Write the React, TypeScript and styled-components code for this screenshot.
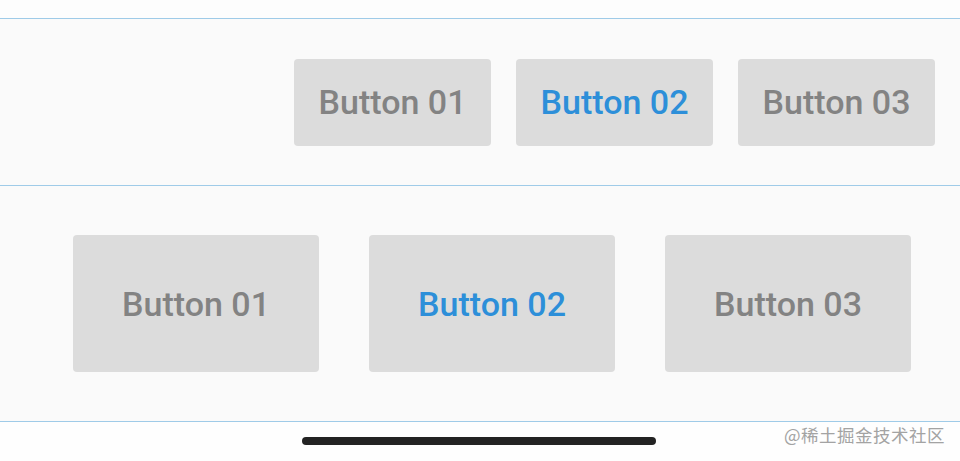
import styled, { createGlobalStyle } from "styled-components";

const GlobalStyle = createGlobalStyle`
  html, body {
    margin: 0;
    padding: 0;
    background: #fdfdfd;
    font-family: Roboto, "Noto Sans", sans-serif;
  }
`;

const Screen = styled.div`
  position: relative;
  width: 960px;
  height: 461px;
  overflow: hidden;
  display: flex;
  flex-direction: column;
  background: #fdfdfd;
`;

const TopGap = styled.div`
  height: 18px;
`;

const Section = styled.section<{
  $height: number;
  $justify: string;
  $gap: number;
  $padL: number;
  $padR: number;
  $closed?: boolean;
}>`
  height: ${({ $height }) => $height}px;
  display: flex;
  align-items: center;
  justify-content: ${({ $justify }) => $justify};
  gap: ${({ $gap }) => $gap}px;
  padding: 0 ${({ $padR }) => $padR}px 0 ${({ $padL }) => $padL}px;
  background: #fafafa;
  border-top: 1px solid #9fcbe8;
  border-bottom: ${({ $closed }) => ($closed ? "1px solid #9fcbe8" : "none")};
  box-sizing: border-box;
`;

const Button = styled.div<{ $w: number; $h: number; $active?: boolean }>`
  width: ${({ $w }) => $w}px;
  height: ${({ $h }) => $h}px;
  display: flex;
  align-items: center;
  justify-content: center;
  background: #dcdcdc;
  border-radius: 4px;
  font-size: 34px;
  font-weight: 500;
  color: ${({ $active }) => ($active ? "#2d8fd9" : "#838383")};
`;

const Bottom = styled.div`
  flex: 1;
  display: flex;
  justify-content: center;
  padding-top: 15px;
  background: #fefefe;
`;

const HomeBar = styled.div`
  width: 354px;
  height: 8px;
  margin-left: -2px;
  border-radius: 4px;
  background: #232323;
`;

const Watermark = styled.div`
  position: absolute;
  right: 15px;
  bottom: 14px;
  font-family: "Noto Sans CJK SC", sans-serif;
  font-size: 17.5px;
  color: #a3a3a3;
  letter-spacing: 0.5px;
`;

const labels = ["Button 01", "Button 02", "Button 03"];

const App = () => {
  return (
    <>
      <GlobalStyle />
      <Screen>
        <TopGap />
        <Section $height={167} $justify="flex-end" $gap={25} $padL={0} $padR={25}>
          {labels.map((l, i) => (
            <Button key={l} $w={197} $h={87} $active={i === 1}>
              {l}
            </Button>
          ))}
        </Section>
        <Section $height={237} $justify="flex-start" $gap={50} $padL={73} $padR={0} $closed>
          {labels.map((l, i) => (
            <Button key={l} $w={246} $h={137} $active={i === 1}>
              {l}
            </Button>
          ))}
        </Section>
        <Bottom>
          <HomeBar />
        </Bottom>
        <Watermark>@稀土掘金技术社区</Watermark>
      </Screen>
    </>
  );
};

export default App;
